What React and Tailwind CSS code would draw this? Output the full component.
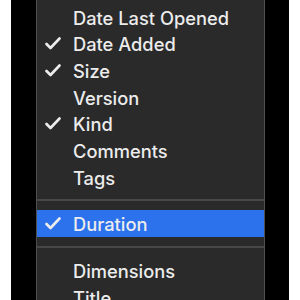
const items = [
  { label: 'Date Created', checked: false },
  { label: 'Date Last Opened', checked: false },
  { label: 'Date Added', checked: true },
  { label: 'Size', checked: true },
  { label: 'Version', checked: false },
  { label: 'Kind', checked: true },
  { label: 'Comments', checked: false },
  { label: 'Tags', checked: false },
];

const lower = [
  { label: 'Dimensions', checked: false },
  { label: 'Title', checked: false },
];

const Check = () => (
  <svg width="16" height="13" viewBox="0 0 16 13" fill="none">
    <path d="M1.5 7 L5.5 11 L14.5 1.5" stroke="currentColor" strokeWidth="2.6" strokeLinecap="round" strokeLinejoin="round" />
  </svg>
);

const Row = ({ label, checked, active }) => (
  <div className={`flex items-center h-[26.67px] pl-[8px] ${active ? 'bg-[#2c72ec]' : ''}`}>
    <div className="w-[28px] flex items-center text-[#ececec]">
      {checked && <Check />}
    </div>
    <span className="text-[18.3px] font-medium text-[#ececec] leading-none pt-[2px]">{label}</span>
  </div>
);

const Separator = () => (
  <div className="h-[20px] flex items-center">
    <div className="w-full h-[2px] bg-[#474747]" />
  </div>
);

export default function App() {
  return (
    <div className="w-[300px] h-[300px] bg-white overflow-hidden flex" style={{ fontFamily: 'Inter, "Liberation Sans", sans-serif' }}>
      <div className="ml-[11px] w-[278px] h-full bg-black pl-[25px] pr-[24px]">
        <div className="h-full border-x border-[#505050] bg-[#2a2a2a] overflow-hidden">
          <div className="-mt-[23px]">
            {items.map(item => <Row key={item.label} {...item} />)}
            <Separator />
            <Row label="Duration" checked active />
            <Separator />
            {lower.map(item => <Row key={item.label} {...item} />)}
          </div>
        </div>
      </div>
    </div>
  );
}
